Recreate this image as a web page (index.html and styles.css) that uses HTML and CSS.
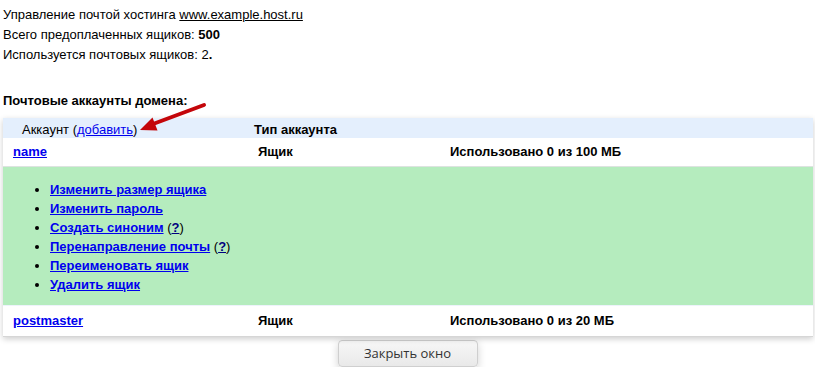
FILE: index.html
```html
<!DOCTYPE html>
<html lang="ru">
<head>
    <meta charset="UTF-8">
    <title>Управление почтой хостинга</title>
    <link rel="stylesheet" href="styles.css">
</head>
<body>
    <div class="info">
        <p>Управление почтой хостинга <a href="#" class="plain-link">www.example.host.ru</a></p>
        <p>Всего предоплаченных ящиков: <b>500</b></p>
        <p>Используется почтовых ящиков: 2<b>.</b></p>
    </div>

    <h3 class="section-title">Почтовые аккаунты домена:</h3>

    <div class="table-wrap">
        <table class="accounts">
            <colgroup>
                <col class="col-name">
                <col class="col-type">
                <col>
            </colgroup>
            <tr class="head">
                <th class="head-account">Аккаунт (<a href="#">добавить</a>)</th>
                <th class="head-type">Тип аккаунта</th>
                <th></th>
            </tr>
            <tr class="row">
                <td><a href="#" class="acc-link">name</a></td>
                <td><b>Ящик</b></td>
                <td><b>Использовано 0 из 100 МБ</b></td>
            </tr>
            <tr class="actions">
                <td colspan="3">
                    <ul>
                        <li><a href="#">Изменить размер ящика</a></li>
                        <li><a href="#">Изменить пароль</a></li>
                        <li><a href="#">Создать синоним</a> (<a href="#" class="help">?</a>)</li>
                        <li><a href="#">Перенаправление почты</a> (<a href="#" class="help">?</a>)</li>
                        <li><a href="#">Переименовать ящик</a></li>
                        <li><a href="#">Удалить ящик</a></li>
                    </ul>
                </td>
            </tr>
            <tr class="row row-last">
                <td><a href="#" class="acc-link">postmaster</a></td>
                <td><b>Ящик</b></td>
                <td><b>Использовано 0 из 20 МБ</b></td>
            </tr>
        </table>

        <!-- стрелка к "добавить" -->
        <svg class="arrow" width="80" height="40" viewBox="0 0 80 40">
            <path d="M71 3 L20 22" stroke="#c4060a" stroke-width="4" stroke-linecap="round" fill="none"/>
            <path d="M7 28 L19.5 15.5 L24.5 28.5 Z" fill="#c4060a"/>
        </svg>
    </div>

    <div class="controls">
        <button class="close-btn">Закрыть окно</button>
    </div>
</body>
</html>
```

FILE: styles.css
```css
* {
    box-sizing: border-box;
}

body {
    margin: 0;
    padding: 5px 3px 0 3px;
    font-family: 'Liberation Sans', Arial, sans-serif;
    font-size: 13px;
    color: #000;
    background: #fff;
}

.info p {
    margin: 0;
    line-height: 20px;
}

.plain-link {
    color: #000;
}

.section-title {
    margin: 26px 0 7px 0;
    font-size: 13px;
    line-height: 20px;
}

.table-wrap {
    position: relative;
}

.accounts {
    width: 810px;
    border-collapse: collapse;
    table-layout: fixed;
    box-shadow: 0 2px 6px rgba(0, 0, 0, 0.2);
}

.col-name {
    width: 245px;
}

.col-type {
    width: 192px;
}

.accounts a {
    color: #0000ee;
}

.head {
    background: #e4effd;
}

.head th {
    text-align: left;
    height: 20px;
    padding: 4px 0 0 0;
    font-size: 13px;
    line-height: 16px;
    vertical-align: top;
}

.head-account {
    font-weight: normal;
    padding-left: 19px !important;
}

.head-type {
    padding-left: 6px !important;
}

.row td {
    background: #fff;
    padding: 0 0 0 10px;
    height: 28px;
    vertical-align: middle;
}

.row-last td {
    height: 31px;
    border-top: 1px solid #eef3fb;
    border-bottom: 1px solid #d6d6d6;
}

.acc-link {
    font-weight: bold;
}

.actions td {
    background: #b5ecbe;
    border-top: 1px solid #dde3e0;
    padding: 13px 0 11px 7px;
}

.actions ul {
    margin: 0;
    padding-left: 40px;
}

.actions li {
    line-height: 19px;
}

.actions a {
    font-weight: bold;
}

.actions a.help {
    color: #000080;
}

.arrow {
    position: absolute;
    left: 130px;
    top: -16px;
}

.controls {
    text-align: center;
    margin-top: 3px;
}

.close-btn {
    width: 140px;
    height: 27px;
    font-family: 'Open Sans', 'Noto Sans', sans-serif;
    font-size: 13px;
    color: #333;
    background: linear-gradient(#f7f7f7, #e9e9e9);
    border: 1px solid #cfcfcf;
    border-radius: 4px;
    box-shadow: 0 3px 8px rgba(0, 0, 0, 0.18);
    cursor: pointer;
}
```
